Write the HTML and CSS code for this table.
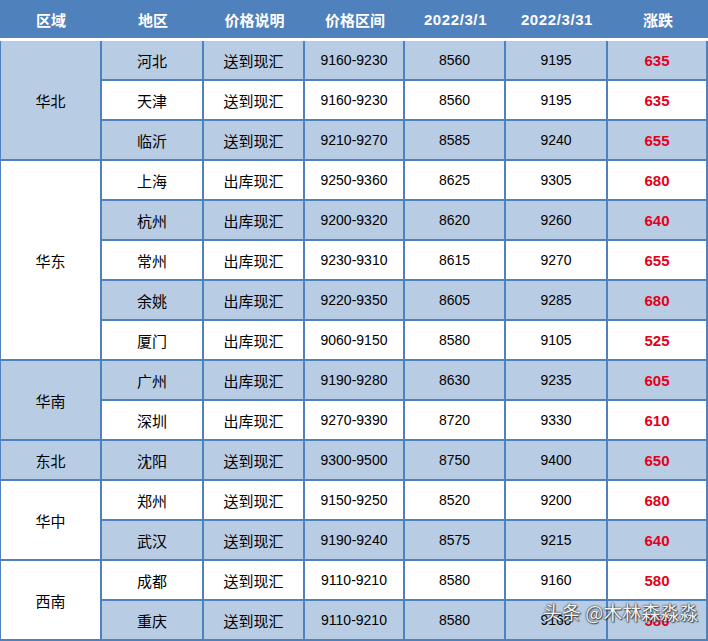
FILE: index.html
```html
<!DOCTYPE html>
<html lang="zh">
<head>
<meta charset="utf-8">
<link rel="stylesheet" href="styles.css">
</head>
<body>
<div class="page">
  <div class="grid">
    <div class="h">区域</div><div class="h">地区</div><div class="h">价格说明</div><div class="h">价格区间</div><div class="h num">2022/3/1</div><div class="h num">2022/3/31</div><div class="h">涨跌</div>

    <div class="c reg b span3">华北</div>
    <div class="c b">河北</div><div class="c b">送到现汇</div><div class="c b n">9160-9230</div><div class="c b n">8560</div><div class="c b n">9195</div><div class="c b n up">635</div>
    <div class="c">天津</div><div class="c">送到现汇</div><div class="c n">9160-9230</div><div class="c n">8560</div><div class="c n">9195</div><div class="c n up">635</div>
    <div class="c b">临沂</div><div class="c b">送到现汇</div><div class="c b n">9210-9270</div><div class="c b n">8585</div><div class="c b n">9240</div><div class="c b n up">655</div>

    <div class="c reg span5">华东</div>
    <div class="c">上海</div><div class="c">出库现汇</div><div class="c n">9250-9360</div><div class="c n">8625</div><div class="c n">9305</div><div class="c n up">680</div>
    <div class="c b">杭州</div><div class="c b">出库现汇</div><div class="c b n">9200-9320</div><div class="c b n">8620</div><div class="c b n">9260</div><div class="c b n up">640</div>
    <div class="c">常州</div><div class="c">出库现汇</div><div class="c n">9230-9310</div><div class="c n">8615</div><div class="c n">9270</div><div class="c n up">655</div>
    <div class="c b">余姚</div><div class="c b">出库现汇</div><div class="c b n">9220-9350</div><div class="c b n">8605</div><div class="c b n">9285</div><div class="c b n up">680</div>
    <div class="c">厦门</div><div class="c">出库现汇</div><div class="c n">9060-9150</div><div class="c n">8580</div><div class="c n">9105</div><div class="c n up">525</div>

    <div class="c reg b span2">华南</div>
    <div class="c b">广州</div><div class="c b">出库现汇</div><div class="c b n">9190-9280</div><div class="c b n">8630</div><div class="c b n">9235</div><div class="c b n up">605</div>
    <div class="c">深圳</div><div class="c">出库现汇</div><div class="c n">9270-9390</div><div class="c n">8720</div><div class="c n">9330</div><div class="c n up">610</div>

    <div class="c reg b">东北</div>
    <div class="c b">沈阳</div><div class="c b">送到现汇</div><div class="c b n">9300-9500</div><div class="c b n">8750</div><div class="c b n">9400</div><div class="c b n up">650</div>

    <div class="c reg span2">华中</div>
    <div class="c">郑州</div><div class="c">送到现汇</div><div class="c n">9150-9250</div><div class="c n">8520</div><div class="c n">9200</div><div class="c n up">680</div>
    <div class="c b">武汉</div><div class="c b">送到现汇</div><div class="c b n">9190-9240</div><div class="c b n">8575</div><div class="c b n">9215</div><div class="c b n up">640</div>

    <div class="c reg span2">西南</div>
    <div class="c">成都</div><div class="c">送到现汇</div><div class="c n">9110-9210</div><div class="c n">8580</div><div class="c n">9160</div><div class="c n up">580</div>
    <div class="c b">重庆</div><div class="c b">送到现汇</div><div class="c b n">9110-9210</div><div class="c b n">8580</div><div class="c b n">9160</div><div class="c b n up">580</div>
  </div>
  <div class="watermark">头条 @木林森淼淼</div>
</div>
</body>
</html>
```

FILE: styles.css
```css
html, body {
  margin: 0;
  padding: 0;
  background: #ffffff;
}

.page {
  position: relative;
  width: 708px;
  height: 641px;
  overflow: hidden;
  font-family: "Noto Sans CJK SC", "Liberation Sans", sans-serif;
}

.grid {
  display: grid;
  grid-template-columns: 102px 102px 101px 100px 101px 102px 100px;
  grid-template-rows: 41px repeat(15, 40px);
}

.h {
  background: #4f81bd;
  color: #ffffff;
  font-weight: bold;
  font-size: 15px;
  display: flex;
  align-items: center;
  justify-content: center;
  border-bottom: 3px solid #ffffff;
  box-sizing: border-box;
}

.h.num {
  font-family: "Liberation Sans", sans-serif;
  font-size: 15px;
  letter-spacing: 0.6px;
}

.c {
  background: #ffffff;
  color: #000000;
  font-size: 15px;
  display: flex;
  align-items: center;
  justify-content: center;
  border-right: 2px solid #4f81bd;
  border-bottom: 2px solid #4f81bd;
  box-sizing: border-box;
}

.c.b {
  background: #b8cce4;
}

.c.reg {
  border-left: 1px solid #4f81bd;
}

.c.n {
  font-family: "Liberation Sans", sans-serif;
  font-size: 14px;
}

.c.up {
  color: #e3001b;
  font-weight: bold;
  font-size: 15px;
}

.span2 { grid-row: span 2; }
.span3 { grid-row: span 3; }
.span5 { grid-row: span 5; }

.watermark {
  position: absolute;
  left: 543px;
  top: 599px;
  font-size: 19px;
  line-height: 26px;
  color: rgba(255, 255, 255, 0.95);
  text-shadow: 0 0 1px #333, 0 0 2px #444, 1px 1px 1px rgba(0, 0, 0, 0.6);
  white-space: nowrap;
}
```
